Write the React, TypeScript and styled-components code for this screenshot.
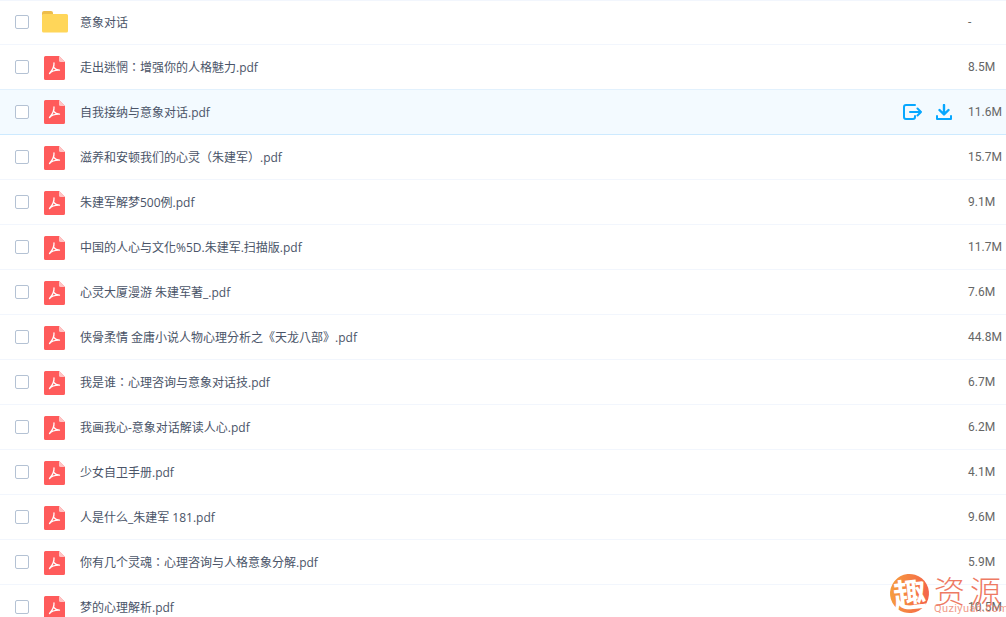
import { createGlobalStyle, styled } from 'styled-components';

const GlobalStyle = createGlobalStyle`
  html, body {
    margin: 0;
    padding: 0;
    height: 100%;
    overflow: hidden;
    background: #fff;
    font-family: Roboto, "Noto Sans CJK TC", sans-serif;
  }
`;

const List = styled.div`
  position: relative;
  width: 1006px;
  height: 617px;
  overflow: hidden;
  border-top: 1px solid #f2f6fd;
  box-sizing: border-box;
`;

const Row = styled.div<{ $active?: boolean }>`
  display: flex;
  align-items: center;
  box-sizing: border-box;
  margin-top: ${(p) => (p.$active ? '-1px' : '0')};
  height: ${(p) => (p.$active ? '46px' : '45px')};
  padding-left: 15px;
  background: ${(p) => (p.$active ? '#f3faff' : '#fff')};
  border-bottom: 1px solid ${(p) => (p.$active ? '#cdeaff' : '#f2f6fd')};
  border-top: ${(p) => (p.$active ? '1px solid #e2f1fd' : 'none')};

  &:first-child {
    height: 44px;
    padding-bottom: 2px;
  }
`;

const Check = styled.span`
  flex: none;
  width: 12px;
  height: 12px;
  border: 1px solid #b4c2d4;
  border-radius: 2px;
  background: #fff;
  margin-right: 13px;
`;

const IconSlot = styled.span`
  flex: none;
  width: 26px;
  height: 26px;
  display: flex;
  align-items: center;
  justify-content: center;
  margin-right: 12px;
`;

const Name = styled.span`
  flex: 1;
  font-family: "Open Sans", "Noto Sans CJK TC", sans-serif;
  font-size: 12px;
  color: #4a5468;
  white-space: nowrap;
`;

const Actions = styled.span`
  display: flex;
  align-items: center;
  gap: 14px;
  margin-right: 16px;
`;

const Size = styled.span`
  flex: none;
  width: 38px;
  font-size: 12px;
  color: #666;
  white-space: nowrap;
`;

const Watermark = styled.div`
  position: absolute;
  left: 890px;
  top: 573px;
  display: flex;
  align-items: flex-start;
  gap: 5px;
`;

const Badge = styled.span`
  width: 39px;
  height: 39px;
  border-radius: 50%;
  background: linear-gradient(100deg, #f6a13c, #f45f4b);
  color: #fff;
  font-size: 33px;
  font-weight: 700;
  line-height: 38px;
  text-align: center;
  font-family: "Noto Sans CJK SC", sans-serif;
  transform: rotate(-6deg);
`;

const Brand = styled.span`
  display: flex;
  flex-direction: column;
  color: #ee7a63;
`;

const BrandName = styled.span`
  font-size: 31px;
  line-height: 32px;
  letter-spacing: 5px;
  font-family: "Noto Sans CJK SC", sans-serif;
  font-weight: 300;
`;

const BrandSub = styled.span`
  margin-top: -3px;
  font-size: 11px;
  line-height: 12px;
  letter-spacing: 0.4px;
  opacity: 0.75;
`;

const PdfSvg = styled.svg<{ $active?: boolean }>`
  margin-left: -1px;
  margin-top: ${(p) => (p.$active ? '0' : '2px')};
`;

const FolderIcon = () => (
  <svg width="26" height="22" viewBox="0 0 26 22">
    <path d="M0 2a2 2 0 0 1 2-2h7a2 2 0 0 1 2 2v2H0z" fill="#eebd4a" />
    <path d="M0 4.500a1.500 1.500 0 0 1 1.500-1.500h23a1.500 1.500 0 0 1 1.500 1.500V20a1.500 1.500 0 0 1-1.500 1.500h-23A1.500 1.500 0 0 1 0 20z" fill="#ffd659" />
  </svg>
);

const PdfIcon = ({ active }: { active?: boolean }) => (
  <PdfSvg $active={active} width="21" height="24" viewBox="0 0 21 24">
    <path d="M1.500 0H15l6 6v16.500a1.500 1.500 0 0 1-1.500 1.500h-18A1.500 1.500 0 0 1 0 22.500v-21A1.500 1.500 0 0 1 1.500 0z" fill="#ff5b5b" />
    <path d="M15 0l6 6h-4.500A1.500 1.500 0 0 1 15 4.500z" fill="#ffc4c4" />
    <path d="M10 7c.3 3.500-1 6.500-4.500 10.500M10 11.500c1 1.600 2.500 2.400 5.500 2.600M5.500 17.500c2-2.400 5.500-3.500 10-3.400" fill="none" stroke="#fff" strokeWidth="1.300" strokeLinecap="round" />
  </PdfSvg>
);

const ShareIcon = () => (
  <svg width="19" height="16" viewBox="0 0 19 16" fill="none" stroke="#06a7ff" strokeWidth="2" strokeLinecap="round" strokeLinejoin="round">
    <path d="M12 1H3a2 2 0 0 0-2 2v10a2 2 0 0 0 2 2h7a2 2 0 0 0 2-2v-1" />
    <path d="M7 8h11M14.500 4.500L18 8l-3.500 3.500" />
  </svg>
);

const DownloadIcon = () => (
  <svg width="16" height="16" viewBox="0 0 16 16" fill="none" stroke="#06a7ff" strokeWidth="2" strokeLinecap="round" strokeLinejoin="round">
    <path d="M8 1v8M3.500 6L8 10.500 12.500 6" strokeWidth="2.400" />
    <path d="M1 12v3h14v-3" />
  </svg>
);

const files = [
  { name: '意象对话', size: '-', folder: true },
  { name: '走出迷惘：增强你的人格魅力.pdf', size: '8.5M' },
  { name: '自我接纳与意象对话.pdf', size: '11.6M', active: true },
  { name: '滋养和安顿我们的心灵（朱建军）.pdf', size: '15.7M' },
  { name: '朱建军解梦500例.pdf', size: '9.1M' },
  { name: '中国的人心与文化%5D.朱建军.扫描版.pdf', size: '11.7M' },
  { name: '心灵大厦漫游 朱建军著_.pdf', size: '7.6M' },
  { name: '侠骨柔情 金庸小说人物心理分析之《天龙八部》.pdf', size: '44.8M' },
  { name: '我是谁：心理咨询与意象对话技.pdf', size: '6.7M' },
  { name: '我画我心-意象对话解读人心.pdf', size: '6.2M' },
  { name: '少女自卫手册.pdf', size: '4.1M' },
  { name: '人是什么_朱建军 181.pdf', size: '9.6M' },
  { name: '你有几个灵魂：心理咨询与人格意象分解.pdf', size: '5.9M' },
  { name: '梦的心理解析.pdf', size: '10.5M' },
];

export default function App() {
  return (
    <>
      <GlobalStyle />
      <List>
        {files.map((file) => (
          <Row key={file.name} $active={file.active}>
            <Check />
            <IconSlot>{file.folder ? <FolderIcon /> : <PdfIcon active={file.active} />}</IconSlot>
            <Name>{file.name}</Name>
            {file.active && (
              <Actions>
                <ShareIcon />
                <DownloadIcon />
              </Actions>
            )}
            <Size>{file.size}</Size>
          </Row>
        ))}
        <Watermark>
          <Badge>趣</Badge>
          <Brand>
            <BrandName>资源</BrandName>
            <BrandSub>Quziyuan.com</BrandSub>
          </Brand>
        </Watermark>
      </List>
    </>
  );
}
